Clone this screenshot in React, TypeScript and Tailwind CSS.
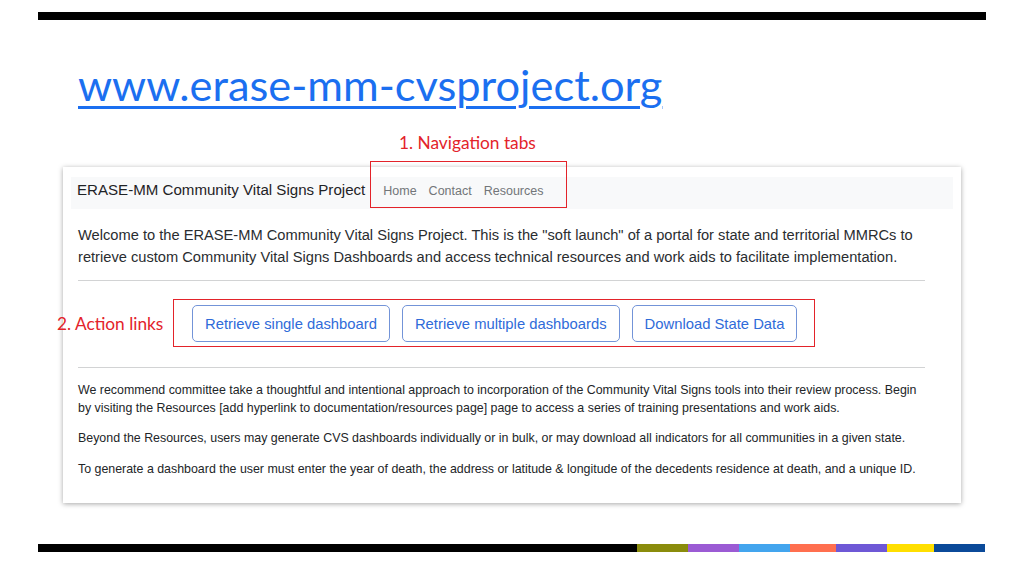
import React from "react";

const slideFont = { fontFamily: "Lato, 'Open Sans', sans-serif" };

const stripes = [
  { w: "w-[599px]", c: "bg-black" },
  { w: "w-[51px]", c: "bg-[#8a8c0c]" },
  { w: "w-[51px]", c: "bg-[#9b5bd4]" },
  { w: "w-[51px]", c: "bg-[#43a5ee]" },
  { w: "w-[46px]", c: "bg-[#ff6f4f]" },
  { w: "w-[51px]", c: "bg-[#6e58d6]" },
  { w: "w-[47px]", c: "bg-[#ffdf00]" },
  { w: "w-[51px]", c: "bg-[#0b4a99]" },
];

function ActionButton({ label }: { label: string }) {
  return (
    <button className="h-[37px] px-[12px] rounded-[5px] border border-[#7394d8] text-[#2f6bd9] text-[14.8px] leading-[20px] bg-white">
      {label}
    </button>
  );
}

export default function App() {
  return (
    <div className="relative w-[1024px] h-[575px] bg-white overflow-hidden">
      <div className="mx-[38px] pt-[12px]">
        <div className="h-[8px] bg-black" />
      </div>

      <h1
        className="ml-[78px] mt-[40px] text-[43.4px] leading-[48px] text-[#1b6ff0] underline decoration-[3px] underline-offset-[5px]"
        style={slideFont}
      >
        www.erase-mm-cvsproject.org
      </h1>

      <div
        className="ml-[399px] mt-[25px] h-[20px] text-[17.3px] leading-[20px] text-[#e3232a]"
        style={slideFont}
      >
        1. Navigation tabs
      </div>

      {/* web page capture */}
      <div
        className="ml-[63px] mt-[14px] w-[898px] h-[336px] bg-white px-[8px] pt-[10px] shadow-[0_1px_5px_rgba(0,0,0,0.35)]"
        style={{ fontFamily: "'Liberation Sans', Arial, sans-serif" }}
      >
        <nav className="h-[32px] bg-[#f8f9fa] pl-[6px] pt-[3px] flex items-baseline leading-[20px]">
          <span className="text-[15.1px] text-[#1f2326]">ERASE-MM Community Vital Signs Project</span>
          <div className="flex items-baseline gap-[12px] ml-[18px] text-[12.5px] text-[#727679]">
            <span>Home</span>
            <span>Contact</span>
            <span>Resources</span>
          </div>
        </nav>

        <div className="pl-[7px] w-[854px]">
          <p className="mt-[14.5px] text-[14.67px] leading-[22px] text-[#2a2d30]">
            Welcome to the ERASE-MM Community Vital Signs Project. This is the "soft launch" of a portal for state
            and territorial MMRCs to retrieve custom Community Vital Signs Dashboards and access technical resources
            and work aids to facilitate implementation.
          </p>
          <div className="mt-[12px] border-t border-[#d2d3d4]" />

          <div className="mt-[24.5px] flex gap-[12px] pl-[114px]">
            <ActionButton label="Retrieve single dashboard" />
            <ActionButton label="Retrieve multiple dashboards" />
            <ActionButton label="Download State Data" />
          </div>

          <div className="mt-[24.5px] border-t border-[#d2d3d4]" />

          <div className="mt-[13px] text-[12.4px] leading-[18px] text-[#222528] flex flex-col gap-[12.5px]">
            <p>
              We recommend committee take a thoughtful and intentional approach to incorporation of the Community
              Vital Signs tools into their review process. Begin
              <br />
              by visiting the Resources [add hyperlink to documentation/resources page] page to access a series of
              training presentations and work aids.
            </p>
            <p>
              Beyond the Resources, users may generate CVS dashboards individually or in bulk, or may download all
              indicators for all communities in a given state.
            </p>
            <p>
              To generate a dashboard the user must enter the year of death, the address or latitude &amp; longitude of
              the decedents residence at death, and a unique ID.
            </p>
          </div>
        </div>
      </div>

      <div className="mx-[38px] mt-[41px] flex h-[8px]">
        {stripes.map((s, i) => (
          <div key={i} className={`${s.w} ${s.c} h-full`} />
        ))}
      </div>

      {/* annotations */}
      <div className="absolute left-[370px] top-[161px] w-[197px] h-[47px] border-[1.5px] border-[#e3232a]" />
      <div className="absolute left-[173px] top-[299px] w-[642px] h-[48px] border-[1.5px] border-[#e3232a]" />
      <div
        className="absolute left-[57px] top-[314px] text-[17.3px] leading-[20px] text-[#e3232a]"
        style={slideFont}
      >
        2. Action links
      </div>
    </div>
  );
}
